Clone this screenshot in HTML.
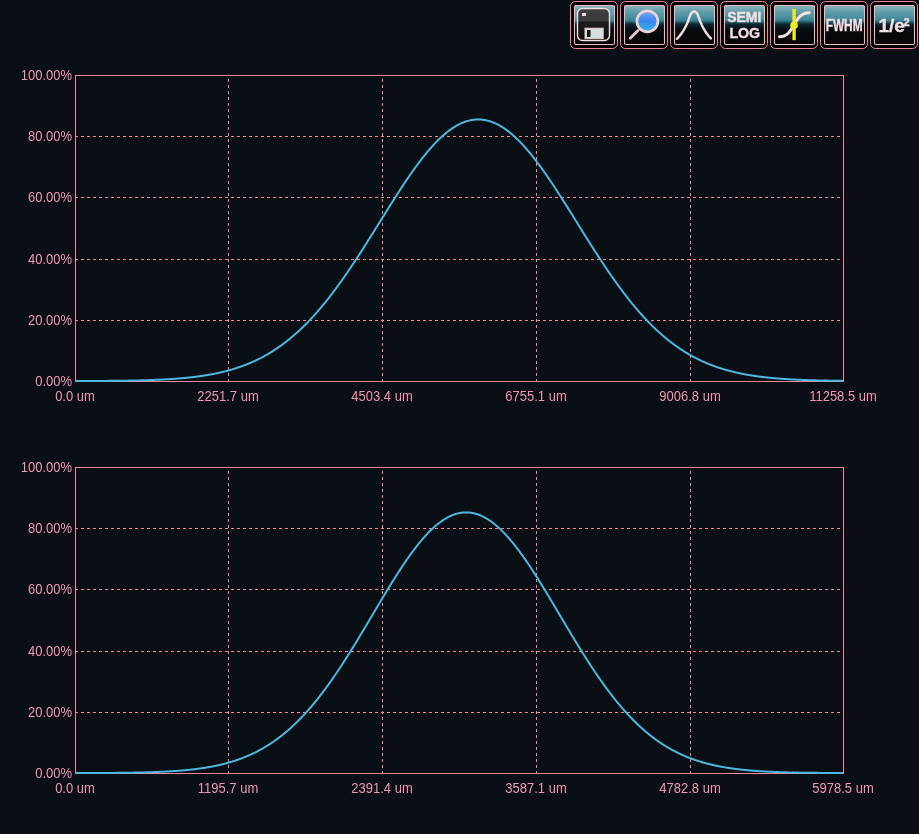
<!DOCTYPE html>
<html><head><meta charset="utf-8"><style>
html,body{margin:0;padding:0;width:919px;height:834px;overflow:hidden;background:#0a0e15;}
.pl text{font-family:"Liberation Sans",sans-serif;font-size:13px;}
svg{will-change:transform}
.cv{fill:none;stroke:#4cb8e0;stroke-width:2.0;stroke-linejoin:round;shape-rendering:geometricPrecision}
</style></head><body>
<svg width="919" height="834" viewBox="0 0 919 834" style="position:absolute;left:0;top:0">
<g class="pl" shape-rendering="crispEdges" fill="#f096b0">
<path d="M75 136.5H843" stroke="#f5869a" stroke-dasharray="3 3"/>
<path d="M75 197.5H843" stroke="#f5869a" stroke-dasharray="3 3"/>
<path d="M75 259.5H843" stroke="#f5869a" stroke-dasharray="3 3"/>
<path d="M75 320.5H843" stroke="#f5869a" stroke-dasharray="3 3"/>
<path d="M228.5 382V75" stroke="#f5869a" stroke-dasharray="3 3"/>
<path d="M382.5 382V75" stroke="#f5869a" stroke-dasharray="3 3"/>
<path d="M536.5 382V75" stroke="#f5869a" stroke-dasharray="3 3"/>
<path d="M690.5 382V75" stroke="#f5869a" stroke-dasharray="3 3"/>
<rect x="75.5" y="75.5" width="768" height="306" fill="none" stroke="#f5869a"/>
<path class="cv" d="M75.0,381.04 L75.5,381.04 L76.0,381.04 L76.5,381.03 L77.0,381.03 L77.5,381.03 L78.0,381.03 L78.5,381.03 L79.0,381.03 L79.5,381.03 L80.0,381.02 L80.5,381.02 L81.0,381.02 L81.5,381.02 L82.0,381.02 L82.5,381.02 L83.0,381.01 L83.5,381.01 L84.0,381.01 L84.5,381.01 L85.0,381.01 L85.5,381.00 L86.0,381.00 L86.5,381.00 L87.0,381.00 L87.5,381.00 L88.0,380.99 L88.5,380.99 L89.0,380.99 L89.5,380.99 L90.0,380.99 L90.5,380.98 L91.0,380.98 L91.5,380.98 L92.0,380.98 L92.5,380.97 L93.0,380.97 L93.5,380.97 L94.0,380.97 L94.5,380.96 L95.0,380.96 L95.5,380.96 L96.0,380.95 L96.5,380.95 L97.0,380.95 L97.5,380.95 L98.0,380.94 L98.5,380.94 L99.0,380.94 L99.5,380.93 L100.0,380.93 L100.5,380.93 L101.0,380.92 L101.5,380.92 L102.0,380.92 L102.5,380.91 L103.0,380.91 L103.5,380.91 L104.0,380.90 L104.5,380.90 L105.0,380.89 L105.5,380.89 L106.0,380.89 L106.5,380.88 L107.0,380.88 L107.5,380.87 L108.0,380.87 L108.5,380.87 L109.0,380.86 L109.5,380.86 L110.0,380.85 L110.5,380.85 L111.0,380.84 L111.5,380.84 L112.0,380.83 L112.5,380.83 L113.0,380.82 L113.5,380.82 L114.0,380.81 L114.5,380.81 L115.0,380.80 L115.5,380.79 L116.0,380.79 L116.5,380.78 L117.0,380.78 L117.5,380.77 L118.0,380.76 L118.5,380.76 L119.0,380.75 L119.5,380.75 L120.0,380.74 L120.5,380.73 L121.0,380.73 L121.5,380.72 L122.0,380.71 L122.5,380.70 L123.0,380.70 L123.5,380.69 L124.0,380.68 L124.5,380.67 L125.0,380.67 L125.5,380.66 L126.0,380.65 L126.5,380.64 L127.0,380.63 L127.5,380.63 L128.0,380.62 L128.5,380.61 L129.0,380.60 L129.5,380.59 L130.0,380.58 L130.5,380.57 L131.0,380.56 L131.5,380.55 L132.0,380.54 L132.5,380.53 L133.0,380.52 L133.5,380.51 L134.0,380.50 L134.5,380.49 L135.0,380.48 L135.5,380.47 L136.0,380.46 L136.5,380.45 L137.0,380.44 L137.5,380.42 L138.0,380.41 L138.5,380.40 L139.0,380.39 L139.5,380.37 L140.0,380.36 L140.5,380.35 L141.0,380.34 L141.5,380.32 L142.0,380.31 L142.5,380.30 L143.0,380.28 L143.5,380.27 L144.0,380.25 L144.5,380.24 L145.0,380.22 L145.5,380.21 L146.0,380.19 L146.5,380.18 L147.0,380.16 L147.5,380.15 L148.0,380.13 L148.5,380.11 L149.0,380.10 L149.5,380.08 L150.0,380.06 L150.5,380.04 L151.0,380.03 L151.5,380.01 L152.0,379.99 L152.5,379.97 L153.0,379.95 L153.5,379.93 L154.0,379.91 L154.5,379.89 L155.0,379.87 L155.5,379.85 L156.0,379.83 L156.5,379.81 L157.0,379.79 L157.5,379.77 L158.0,379.74 L158.5,379.72 L159.0,379.70 L159.5,379.68 L160.0,379.65 L160.5,379.63 L161.0,379.60 L161.5,379.58 L162.0,379.55 L162.5,379.53 L163.0,379.50 L163.5,379.48 L164.0,379.45 L164.5,379.42 L165.0,379.40 L165.5,379.37 L166.0,379.34 L166.5,379.31 L167.0,379.28 L167.5,379.26 L168.0,379.23 L168.5,379.20 L169.0,379.17 L169.5,379.13 L170.0,379.10 L170.5,379.07 L171.0,379.04 L171.5,379.01 L172.0,378.97 L172.5,378.94 L173.0,378.91 L173.5,378.87 L174.0,378.84 L174.5,378.80 L175.0,378.76 L175.5,378.73 L176.0,378.69 L176.5,378.65 L177.0,378.61 L177.5,378.58 L178.0,378.54 L178.5,378.50 L179.0,378.46 L179.5,378.42 L180.0,378.37 L180.5,378.33 L181.0,378.29 L181.5,378.25 L182.0,378.20 L182.5,378.16 L183.0,378.11 L183.5,378.07 L184.0,378.02 L184.5,377.97 L185.0,377.93 L185.5,377.88 L186.0,377.83 L186.5,377.78 L187.0,377.73 L187.5,377.68 L188.0,377.63 L188.5,377.58 L189.0,377.52 L189.5,377.47 L190.0,377.42 L190.5,377.36 L191.0,377.31 L191.5,377.25 L192.0,377.19 L192.5,377.14 L193.0,377.08 L193.5,377.02 L194.0,376.96 L194.5,376.90 L195.0,376.83 L195.5,376.77 L196.0,376.71 L196.5,376.65 L197.0,376.58 L197.5,376.51 L198.0,376.45 L198.5,376.38 L199.0,376.31 L199.5,376.24 L200.0,376.17 L200.5,376.10 L201.0,376.03 L201.5,375.96 L202.0,375.89 L202.5,375.81 L203.0,375.74 L203.5,375.66 L204.0,375.58 L204.5,375.50 L205.0,375.43 L205.5,375.34 L206.0,375.26 L206.5,375.18 L207.0,375.10 L207.5,375.01 L208.0,374.93 L208.5,374.84 L209.0,374.76 L209.5,374.67 L210.0,374.58 L210.5,374.49 L211.0,374.40 L211.5,374.31 L212.0,374.21 L212.5,374.12 L213.0,374.02 L213.5,373.92 L214.0,373.83 L214.5,373.73 L215.0,373.63 L215.5,373.52 L216.0,373.42 L216.5,373.32 L217.0,373.21 L217.5,373.11 L218.0,373.00 L218.5,372.89 L219.0,372.78 L219.5,372.67 L220.0,372.56 L220.5,372.44 L221.0,372.33 L221.5,372.21 L222.0,372.09 L222.5,371.97 L223.0,371.85 L223.5,371.73 L224.0,371.61 L224.5,371.48 L225.0,371.36 L225.5,371.23 L226.0,371.10 L226.5,370.97 L227.0,370.84 L227.5,370.71 L228.0,370.57 L228.5,370.44 L229.0,370.30 L229.5,370.16 L230.0,370.02 L230.5,369.88 L231.0,369.74 L231.5,369.59 L232.0,369.44 L232.5,369.30 L233.0,369.15 L233.5,368.99 L234.0,368.84 L234.5,368.69 L235.0,368.53 L235.5,368.37 L236.0,368.21 L236.5,368.05 L237.0,367.89 L237.5,367.73 L238.0,367.56 L238.5,367.39 L239.0,367.22 L239.5,367.05 L240.0,366.88 L240.5,366.70 L241.0,366.53 L241.5,366.35 L242.0,366.17 L242.5,365.99 L243.0,365.80 L243.5,365.62 L244.0,365.43 L244.5,365.24 L245.0,365.05 L245.5,364.86 L246.0,364.66 L246.5,364.46 L247.0,364.27 L247.5,364.07 L248.0,363.86 L248.5,363.66 L249.0,363.45 L249.5,363.24 L250.0,363.03 L250.5,362.82 L251.0,362.60 L251.5,362.39 L252.0,362.17 L252.5,361.95 L253.0,361.73 L253.5,361.50 L254.0,361.27 L254.5,361.04 L255.0,360.81 L255.5,360.58 L256.0,360.34 L256.5,360.11 L257.0,359.87 L257.5,359.62 L258.0,359.38 L258.5,359.13 L259.0,358.88 L259.5,358.63 L260.0,358.38 L260.5,358.12 L261.0,357.87 L261.5,357.61 L262.0,357.34 L262.5,357.08 L263.0,356.81 L263.5,356.54 L264.0,356.27 L264.5,356.00 L265.0,355.72 L265.5,355.44 L266.0,355.16 L266.5,354.88 L267.0,354.59 L267.5,354.30 L268.0,354.01 L268.5,353.72 L269.0,353.42 L269.5,353.12 L270.0,352.82 L270.5,352.52 L271.0,352.21 L271.5,351.90 L272.0,351.59 L272.5,351.28 L273.0,350.96 L273.5,350.64 L274.0,350.32 L274.5,350.00 L275.0,349.67 L275.5,349.34 L276.0,349.01 L276.5,348.68 L277.0,348.34 L277.5,348.00 L278.0,347.66 L278.5,347.31 L279.0,346.97 L279.5,346.62 L280.0,346.26 L280.5,345.91 L281.0,345.55 L281.5,345.19 L282.0,344.82 L282.5,344.46 L283.0,344.09 L283.5,343.72 L284.0,343.34 L284.5,342.96 L285.0,342.58 L285.5,342.20 L286.0,341.81 L286.5,341.42 L287.0,341.03 L287.5,340.64 L288.0,340.24 L288.5,339.84 L289.0,339.44 L289.5,339.03 L290.0,338.62 L290.5,338.21 L291.0,337.79 L291.5,337.38 L292.0,336.96 L292.5,336.53 L293.0,336.11 L293.5,335.68 L294.0,335.25 L294.5,334.81 L295.0,334.37 L295.5,333.93 L296.0,333.49 L296.5,333.04 L297.0,332.59 L297.5,332.14 L298.0,331.68 L298.5,331.23 L299.0,330.76 L299.5,330.30 L300.0,329.83 L300.5,329.36 L301.0,328.89 L301.5,328.41 L302.0,327.93 L302.5,327.45 L303.0,326.96 L303.5,326.48 L304.0,325.99 L304.5,325.49 L305.0,324.99 L305.5,324.49 L306.0,323.99 L306.5,323.48 L307.0,322.97 L307.5,322.46 L308.0,321.95 L308.5,321.43 L309.0,320.91 L309.5,320.38 L310.0,319.86 L310.5,319.33 L311.0,318.79 L311.5,318.26 L312.0,317.72 L312.5,317.18 L313.0,316.63 L313.5,316.08 L314.0,315.53 L314.5,314.98 L315.0,314.42 L315.5,313.86 L316.0,313.30 L316.5,312.73 L317.0,312.16 L317.5,311.59 L318.0,311.02 L318.5,310.44 L319.0,309.86 L319.5,309.27 L320.0,308.69 L320.5,308.10 L321.0,307.51 L321.5,306.91 L322.0,306.31 L322.5,305.71 L323.0,305.11 L323.5,304.50 L324.0,303.89 L324.5,303.28 L325.0,302.66 L325.5,302.04 L326.0,301.42 L326.5,300.80 L327.0,300.17 L327.5,299.54 L328.0,298.91 L328.5,298.28 L329.0,297.64 L329.5,297.00 L330.0,296.35 L330.5,295.71 L331.0,295.06 L331.5,294.41 L332.0,293.75 L332.5,293.10 L333.0,292.44 L333.5,291.78 L334.0,291.11 L334.5,290.44 L335.0,289.77 L335.5,289.10 L336.0,288.43 L336.5,287.75 L337.0,287.07 L337.5,286.39 L338.0,285.70 L338.5,285.01 L339.0,284.32 L339.5,283.63 L340.0,282.94 L340.5,282.24 L341.0,281.54 L341.5,280.84 L342.0,280.13 L342.5,279.42 L343.0,278.71 L343.5,278.00 L344.0,277.29 L344.5,276.57 L345.0,275.85 L345.5,275.13 L346.0,274.41 L346.5,273.69 L347.0,272.96 L347.5,272.23 L348.0,271.50 L348.5,270.76 L349.0,270.03 L349.5,269.29 L350.0,268.55 L350.5,267.81 L351.0,267.07 L351.5,266.32 L352.0,265.57 L352.5,264.82 L353.0,264.07 L353.5,263.32 L354.0,262.57 L354.5,261.81 L355.0,261.05 L355.5,260.29 L356.0,259.53 L356.5,258.77 L357.0,258.00 L357.5,257.24 L358.0,256.47 L358.5,255.70 L359.0,254.93 L359.5,254.15 L360.0,253.38 L360.5,252.60 L361.0,251.83 L361.5,251.05 L362.0,250.27 L362.5,249.49 L363.0,248.71 L363.5,247.92 L364.0,247.14 L364.5,246.35 L365.0,245.56 L365.5,244.78 L366.0,243.99 L366.5,243.20 L367.0,242.41 L367.5,241.61 L368.0,240.82 L368.5,240.03 L369.0,239.23 L369.5,238.44 L370.0,237.64 L370.5,236.84 L371.0,236.05 L371.5,235.25 L372.0,234.45 L372.5,233.65 L373.0,232.85 L373.5,232.05 L374.0,231.25 L374.5,230.45 L375.0,229.64 L375.5,228.84 L376.0,228.04 L376.5,227.24 L377.0,226.43 L377.5,225.63 L378.0,224.82 L378.5,224.02 L379.0,223.22 L379.5,222.41 L380.0,221.61 L380.5,220.81 L381.0,220.00 L381.5,219.20 L382.0,218.39 L382.5,217.59 L383.0,216.79 L383.5,215.99 L384.0,215.18 L384.5,214.38 L385.0,213.58 L385.5,212.78 L386.0,211.98 L386.5,211.18 L387.0,210.38 L387.5,209.58 L388.0,208.78 L388.5,207.98 L389.0,207.19 L389.5,206.39 L390.0,205.60 L390.5,204.80 L391.0,204.01 L391.5,203.22 L392.0,202.43 L392.5,201.64 L393.0,200.85 L393.5,200.06 L394.0,199.27 L394.5,198.49 L395.0,197.71 L395.5,196.92 L396.0,196.14 L396.5,195.36 L397.0,194.58 L397.5,193.81 L398.0,193.03 L398.5,192.26 L399.0,191.49 L399.5,190.72 L400.0,189.95 L400.5,189.18 L401.0,188.42 L401.5,187.66 L402.0,186.90 L402.5,186.14 L403.0,185.38 L403.5,184.63 L404.0,183.87 L404.5,183.12 L405.0,182.38 L405.5,181.63 L406.0,180.89 L406.5,180.15 L407.0,179.41 L407.5,178.67 L408.0,177.94 L408.5,177.21 L409.0,176.48 L409.5,175.76 L410.0,175.03 L410.5,174.31 L411.0,173.60 L411.5,172.88 L412.0,172.17 L412.5,171.46 L413.0,170.76 L413.5,170.05 L414.0,169.35 L414.5,168.66 L415.0,167.97 L415.5,167.28 L416.0,166.59 L416.5,165.91 L417.0,165.23 L417.5,164.55 L418.0,163.88 L418.5,163.21 L419.0,162.54 L419.5,161.88 L420.0,161.22 L420.5,160.57 L421.0,159.91 L421.5,159.27 L422.0,158.62 L422.5,157.98 L423.0,157.35 L423.5,156.72 L424.0,156.09 L424.5,155.46 L425.0,154.84 L425.5,154.23 L426.0,153.62 L426.5,153.01 L427.0,152.41 L427.5,151.81 L428.0,151.21 L428.5,150.62 L429.0,150.04 L429.5,149.46 L430.0,148.88 L430.5,148.31 L431.0,147.74 L431.5,147.18 L432.0,146.62 L432.5,146.06 L433.0,145.52 L433.5,144.97 L434.0,144.43 L434.5,143.90 L435.0,143.37 L435.5,142.84 L436.0,142.32 L436.5,141.81 L437.0,141.30 L437.5,140.79 L438.0,140.30 L438.5,139.80 L439.0,139.31 L439.5,138.83 L440.0,138.35 L440.5,137.88 L441.0,137.41 L441.5,136.95 L442.0,136.49 L442.5,136.04 L443.0,135.59 L443.5,135.15 L444.0,134.71 L444.5,134.28 L445.0,133.86 L445.5,133.44 L446.0,133.03 L446.5,132.62 L447.0,132.22 L447.5,131.82 L448.0,131.43 L448.5,131.05 L449.0,130.67 L449.5,130.30 L450.0,129.93 L450.5,129.57 L451.0,129.22 L451.5,128.87 L452.0,128.53 L452.5,128.19 L453.0,127.86 L453.5,127.54 L454.0,127.22 L454.5,126.90 L455.0,126.60 L455.5,126.30 L456.0,126.01 L456.5,125.72 L457.0,125.44 L457.5,125.16 L458.0,124.89 L458.5,124.63 L459.0,124.37 L459.5,124.12 L460.0,123.88 L460.5,123.64 L461.0,123.41 L461.5,123.19 L462.0,122.97 L462.5,122.76 L463.0,122.55 L463.5,122.36 L464.0,122.16 L464.5,121.98 L465.0,121.80 L465.5,121.63 L466.0,121.46 L466.5,121.30 L467.0,121.15 L467.5,121.00 L468.0,120.86 L468.5,120.73 L469.0,120.60 L469.5,120.48 L470.0,120.37 L470.5,120.26 L471.0,120.17 L471.5,120.07 L472.0,119.99 L472.5,119.91 L473.0,119.83 L473.5,119.77 L474.0,119.71 L474.5,119.65 L475.0,119.61 L475.5,119.57 L476.0,119.53 L476.5,119.51 L477.0,119.49 L477.5,119.48 L478.0,119.47 L478.5,119.47 L479.0,119.48 L479.5,119.49 L480.0,119.51 L480.5,119.54 L481.0,119.58 L481.5,119.62 L482.0,119.66 L482.5,119.72 L483.0,119.78 L483.5,119.85 L484.0,119.92 L484.5,120.00 L485.0,120.09 L485.5,120.18 L486.0,120.29 L486.5,120.39 L487.0,120.51 L487.5,120.63 L488.0,120.76 L488.5,120.89 L489.0,121.03 L489.5,121.18 L490.0,121.33 L490.5,121.49 L491.0,121.66 L491.5,121.83 L492.0,122.01 L492.5,122.20 L493.0,122.39 L493.5,122.59 L494.0,122.80 L494.5,123.01 L495.0,123.23 L495.5,123.46 L496.0,123.69 L496.5,123.93 L497.0,124.17 L497.5,124.42 L498.0,124.68 L498.5,124.95 L499.0,125.22 L499.5,125.49 L500.0,125.77 L500.5,126.06 L501.0,126.36 L501.5,126.66 L502.0,126.97 L502.5,127.28 L503.0,127.60 L503.5,127.93 L504.0,128.26 L504.5,128.60 L505.0,128.94 L505.5,129.29 L506.0,129.64 L506.5,130.01 L507.0,130.37 L507.5,130.75 L508.0,131.13 L508.5,131.51 L509.0,131.90 L509.5,132.30 L510.0,132.70 L510.5,133.11 L511.0,133.53 L511.5,133.94 L512.0,134.37 L512.5,134.80 L513.0,135.24 L513.5,135.68 L514.0,136.13 L514.5,136.58 L515.0,137.04 L515.5,137.50 L516.0,137.97 L516.5,138.44 L517.0,138.92 L517.5,139.41 L518.0,139.90 L518.5,140.39 L519.0,140.90 L519.5,141.40 L520.0,141.91 L520.5,142.43 L521.0,142.95 L521.5,143.47 L522.0,144.00 L522.5,144.54 L523.0,145.08 L523.5,145.62 L524.0,146.17 L524.5,146.73 L525.0,147.29 L525.5,147.85 L526.0,148.42 L526.5,148.99 L527.0,149.57 L527.5,150.15 L528.0,150.74 L528.5,151.33 L529.0,151.93 L529.5,152.53 L530.0,153.13 L530.5,153.74 L531.0,154.35 L531.5,154.97 L532.0,155.59 L532.5,156.21 L533.0,156.84 L533.5,157.47 L534.0,158.11 L534.5,158.75 L535.0,159.40 L535.5,160.04 L536.0,160.70 L536.5,161.35 L537.0,162.01 L537.5,162.67 L538.0,163.34 L538.5,164.01 L539.0,164.68 L539.5,165.36 L540.0,166.04 L540.5,166.73 L541.0,167.41 L541.5,168.10 L542.0,168.80 L542.5,169.49 L543.0,170.19 L543.5,170.90 L544.0,171.60 L544.5,172.31 L545.0,173.02 L545.5,173.74 L546.0,174.46 L546.5,175.18 L547.0,175.90 L547.5,176.63 L548.0,177.35 L548.5,178.09 L549.0,178.82 L549.5,179.56 L550.0,180.29 L550.5,181.04 L551.0,181.78 L551.5,182.53 L552.0,183.27 L552.5,184.02 L553.0,184.78 L553.5,185.53 L554.0,186.29 L554.5,187.05 L555.0,187.81 L555.5,188.57 L556.0,189.34 L556.5,190.10 L557.0,190.87 L557.5,191.64 L558.0,192.41 L558.5,193.19 L559.0,193.96 L559.5,194.74 L560.0,195.52 L560.5,196.30 L561.0,197.08 L561.5,197.86 L562.0,198.65 L562.5,199.43 L563.0,200.22 L563.5,201.01 L564.0,201.79 L564.5,202.58 L565.0,203.38 L565.5,204.17 L566.0,204.96 L566.5,205.76 L567.0,206.55 L567.5,207.35 L568.0,208.14 L568.5,208.94 L569.0,209.74 L569.5,210.54 L570.0,211.34 L570.5,212.14 L571.0,212.94 L571.5,213.74 L572.0,214.54 L572.5,215.34 L573.0,216.15 L573.5,216.95 L574.0,217.75 L574.5,218.56 L575.0,219.36 L575.5,220.16 L576.0,220.97 L576.5,221.77 L577.0,222.57 L577.5,223.38 L578.0,224.18 L578.5,224.99 L579.0,225.79 L579.5,226.59 L580.0,227.40 L580.5,228.20 L581.0,229.00 L581.5,229.80 L582.0,230.61 L582.5,231.41 L583.0,232.21 L583.5,233.01 L584.0,233.81 L584.5,234.61 L585.0,235.41 L585.5,236.21 L586.0,237.00 L586.5,237.80 L587.0,238.60 L587.5,239.39 L588.0,240.19 L588.5,240.98 L589.0,241.77 L589.5,242.56 L590.0,243.36 L590.5,244.15 L591.0,244.93 L591.5,245.72 L592.0,246.51 L592.5,247.29 L593.0,248.08 L593.5,248.86 L594.0,249.64 L594.5,250.42 L595.0,251.20 L595.5,251.98 L596.0,252.76 L596.5,253.53 L597.0,254.31 L597.5,255.08 L598.0,255.85 L598.5,256.62 L599.0,257.39 L599.5,258.15 L600.0,258.92 L600.5,259.68 L601.0,260.44 L601.5,261.20 L602.0,261.96 L602.5,262.72 L603.0,263.47 L603.5,264.22 L604.0,264.97 L604.5,265.72 L605.0,266.47 L605.5,267.22 L606.0,267.96 L606.5,268.70 L607.0,269.44 L607.5,270.18 L608.0,270.91 L608.5,271.64 L609.0,272.38 L609.5,273.10 L610.0,273.83 L610.5,274.56 L611.0,275.28 L611.5,276.00 L612.0,276.72 L612.5,277.43 L613.0,278.15 L613.5,278.86 L614.0,279.57 L614.5,280.27 L615.0,280.98 L615.5,281.68 L616.0,282.38 L616.5,283.07 L617.0,283.77 L617.5,284.46 L618.0,285.15 L618.5,285.84 L619.0,286.52 L619.5,287.21 L620.0,287.88 L620.5,288.56 L621.0,289.24 L621.5,289.91 L622.0,290.58 L622.5,291.24 L623.0,291.91 L623.5,292.57 L624.0,293.23 L624.5,293.89 L625.0,294.54 L625.5,295.19 L626.0,295.84 L626.5,296.48 L627.0,297.13 L627.5,297.77 L628.0,298.40 L628.5,299.04 L629.0,299.67 L629.5,300.30 L630.0,300.92 L630.5,301.55 L631.0,302.17 L631.5,302.79 L632.0,303.40 L632.5,304.01 L633.0,304.62 L633.5,305.23 L634.0,305.83 L634.5,306.43 L635.0,307.03 L635.5,307.62 L636.0,308.22 L636.5,308.80 L637.0,309.39 L637.5,309.97 L638.0,310.55 L638.5,311.13 L639.0,311.70 L639.5,312.28 L640.0,312.84 L640.5,313.41 L641.0,313.97 L641.5,314.53 L642.0,315.09 L642.5,315.64 L643.0,316.19 L643.5,316.74 L644.0,317.28 L644.5,317.83 L645.0,318.36 L645.5,318.90 L646.0,319.43 L646.5,319.96 L647.0,320.49 L647.5,321.01 L648.0,321.53 L648.5,322.05 L649.0,322.57 L649.5,323.08 L650.0,323.59 L650.5,324.09 L651.0,324.59 L651.5,325.09 L652.0,325.59 L652.5,326.08 L653.0,326.57 L653.5,327.06 L654.0,327.55 L654.5,328.03 L655.0,328.51 L655.5,328.98 L656.0,329.46 L656.5,329.93 L657.0,330.39 L657.5,330.86 L658.0,331.32 L658.5,331.78 L659.0,332.23 L659.5,332.68 L660.0,333.13 L660.5,333.58 L661.0,334.02 L661.5,334.46 L662.0,334.90 L662.5,335.33 L663.0,335.76 L663.5,336.19 L664.0,336.62 L664.5,337.04 L665.0,337.46 L665.5,337.88 L666.0,338.29 L666.5,338.70 L667.0,339.11 L667.5,339.52 L668.0,339.92 L668.5,340.32 L669.0,340.72 L669.5,341.11 L670.0,341.50 L670.5,341.89 L671.0,342.28 L671.5,342.66 L672.0,343.04 L672.5,343.42 L673.0,343.79 L673.5,344.16 L674.0,344.53 L674.5,344.90 L675.0,345.26 L675.5,345.62 L676.0,345.98 L676.5,346.33 L677.0,346.69 L677.5,347.04 L678.0,347.38 L678.5,347.73 L679.0,348.07 L679.5,348.41 L680.0,348.74 L680.5,349.08 L681.0,349.41 L681.5,349.74 L682.0,350.06 L682.5,350.39 L683.0,350.71 L683.5,351.03 L684.0,351.34 L684.5,351.66 L685.0,351.97 L685.5,352.27 L686.0,352.58 L686.5,352.88 L687.0,353.18 L687.5,353.48 L688.0,353.78 L688.5,354.07 L689.0,354.36 L689.5,354.65 L690.0,354.93 L690.5,355.22 L691.0,355.50 L691.5,355.78 L692.0,356.05 L692.5,356.33 L693.0,356.60 L693.5,356.87 L694.0,357.13 L694.5,357.40 L695.0,357.66 L695.5,357.92 L696.0,358.18 L696.5,358.43 L697.0,358.68 L697.5,358.93 L698.0,359.18 L698.5,359.43 L699.0,359.67 L699.5,359.91 L700.0,360.15 L700.5,360.39 L701.0,360.63 L701.5,360.86 L702.0,361.09 L702.5,361.32 L703.0,361.55 L703.5,361.77 L704.0,361.99 L704.5,362.21 L705.0,362.43 L705.5,362.65 L706.0,362.86 L706.5,363.07 L707.0,363.28 L707.5,363.49 L708.0,363.70 L708.5,363.90 L709.0,364.11 L709.5,364.31 L710.0,364.50 L710.5,364.70 L711.0,364.90 L711.5,365.09 L712.0,365.28 L712.5,365.47 L713.0,365.65 L713.5,365.84 L714.0,366.02 L714.5,366.21 L715.0,366.38 L715.5,366.56 L716.0,366.74 L716.5,366.91 L717.0,367.09 L717.5,367.26 L718.0,367.43 L718.5,367.59 L719.0,367.76 L719.5,367.92 L720.0,368.09 L720.5,368.25 L721.0,368.41 L721.5,368.56 L722.0,368.72 L722.5,368.87 L723.0,369.03 L723.5,369.18 L724.0,369.33 L724.5,369.47 L725.0,369.62 L725.5,369.76 L726.0,369.91 L726.5,370.05 L727.0,370.19 L727.5,370.33 L728.0,370.46 L728.5,370.60 L729.0,370.73 L729.5,370.87 L730.0,371.00 L730.5,371.13 L731.0,371.26 L731.5,371.38 L732.0,371.51 L732.5,371.63 L733.0,371.76 L733.5,371.88 L734.0,372.00 L734.5,372.12 L735.0,372.23 L735.5,372.35 L736.0,372.47 L736.5,372.58 L737.0,372.69 L737.5,372.80 L738.0,372.91 L738.5,373.02 L739.0,373.13 L739.5,373.23 L740.0,373.34 L740.5,373.44 L741.0,373.55 L741.5,373.65 L742.0,373.75 L742.5,373.85 L743.0,373.94 L743.5,374.04 L744.0,374.14 L744.5,374.23 L745.0,374.32 L745.5,374.42 L746.0,374.51 L746.5,374.60 L747.0,374.69 L747.5,374.77 L748.0,374.86 L748.5,374.95 L749.0,375.03 L749.5,375.12 L750.0,375.20 L750.5,375.28 L751.0,375.36 L751.5,375.44 L752.0,375.52 L752.5,375.60 L753.0,375.67 L753.5,375.75 L754.0,375.83 L754.5,375.90 L755.0,375.97 L755.5,376.05 L756.0,376.12 L756.5,376.19 L757.0,376.26 L757.5,376.33 L758.0,376.39 L758.5,376.46 L759.0,376.53 L759.5,376.59 L760.0,376.66 L760.5,376.72 L761.0,376.78 L761.5,376.85 L762.0,376.91 L762.5,376.97 L763.0,377.03 L763.5,377.09 L764.0,377.15 L764.5,377.20 L765.0,377.26 L765.5,377.32 L766.0,377.37 L766.5,377.43 L767.0,377.48 L767.5,377.53 L768.0,377.59 L768.5,377.64 L769.0,377.69 L769.5,377.74 L770.0,377.79 L770.5,377.84 L771.0,377.89 L771.5,377.94 L772.0,377.98 L772.5,378.03 L773.0,378.08 L773.5,378.12 L774.0,378.17 L774.5,378.21 L775.0,378.25 L775.5,378.30 L776.0,378.34 L776.5,378.38 L777.0,378.42 L777.5,378.46 L778.0,378.50 L778.5,378.54 L779.0,378.58 L779.5,378.62 L780.0,378.66 L780.5,378.70 L781.0,378.73 L781.5,378.77 L782.0,378.81 L782.5,378.84 L783.0,378.88 L783.5,378.91 L784.0,378.95 L784.5,378.98 L785.0,379.01 L785.5,379.05 L786.0,379.08 L786.5,379.11 L787.0,379.14 L787.5,379.17 L788.0,379.20 L788.5,379.23 L789.0,379.26 L789.5,379.29 L790.0,379.32 L790.5,379.35 L791.0,379.38 L791.5,379.40 L792.0,379.43 L792.5,379.46 L793.0,379.48 L793.5,379.51 L794.0,379.53 L794.5,379.56 L795.0,379.58 L795.5,379.61 L796.0,379.63 L796.5,379.66 L797.0,379.68 L797.5,379.70 L798.0,379.73 L798.5,379.75 L799.0,379.77 L799.5,379.79 L800.0,379.81 L800.5,379.83 L801.0,379.86 L801.5,379.88 L802.0,379.90 L802.5,379.92 L803.0,379.94 L803.5,379.95 L804.0,379.97 L804.5,379.99 L805.0,380.01 L805.5,380.03 L806.0,380.05 L806.5,380.06 L807.0,380.08 L807.5,380.10 L808.0,380.12 L808.5,380.13 L809.0,380.15 L809.5,380.16 L810.0,380.18 L810.5,380.20 L811.0,380.21 L811.5,380.23 L812.0,380.24 L812.5,380.26 L813.0,380.27 L813.5,380.28 L814.0,380.30 L814.5,380.31 L815.0,380.33 L815.5,380.34 L816.0,380.35 L816.5,380.36 L817.0,380.38 L817.5,380.39 L818.0,380.40 L818.5,380.41 L819.0,380.43 L819.5,380.44 L820.0,380.45 L820.5,380.46 L821.0,380.47 L821.5,380.48 L822.0,380.49 L822.5,380.50 L823.0,380.51 L823.5,380.52 L824.0,380.53 L824.5,380.54 L825.0,380.55 L825.5,380.56 L826.0,380.57 L826.5,380.58 L827.0,380.59 L827.5,380.60 L828.0,380.61 L828.5,380.62 L829.0,380.63 L829.5,380.64 L830.0,380.64 L830.5,380.65 L831.0,380.66 L831.5,380.67 L832.0,380.68 L832.5,380.68 L833.0,380.69 L833.5,380.70 L834.0,380.71 L834.5,380.71 L835.0,380.72 L835.5,380.73 L836.0,380.73 L836.5,380.74 L837.0,380.75 L837.5,380.75 L838.0,380.76 L838.5,380.77 L839.0,380.77 L839.5,380.78 L840.0,380.78 L840.5,380.79 L841.0,380.80 L841.5,380.80 L842.0,380.81 L842.5,380.81 L843.0,380.82"/>
<text transform="translate(72 80) scale(1 1.1)" text-anchor="end">100.00%</text>
<text transform="translate(72 141) scale(1 1.1)" text-anchor="end">80.00%</text>
<text transform="translate(72 202) scale(1 1.1)" text-anchor="end">60.00%</text>
<text transform="translate(72 264) scale(1 1.1)" text-anchor="end">40.00%</text>
<text transform="translate(72 325) scale(1 1.1)" text-anchor="end">20.00%</text>
<text transform="translate(72 386) scale(1 1.1)" text-anchor="end">0.00%</text>
<text transform="translate(75 401) scale(1 1.1)" text-anchor="middle">0.0 um</text>
<text transform="translate(228 401) scale(1 1.1)" text-anchor="middle">2251.7 um</text>
<text transform="translate(382 401) scale(1 1.1)" text-anchor="middle">4503.4 um</text>
<text transform="translate(536 401) scale(1 1.1)" text-anchor="middle">6755.1 um</text>
<text transform="translate(690 401) scale(1 1.1)" text-anchor="middle">9006.8 um</text>
<text transform="translate(843 401) scale(1 1.1)" text-anchor="middle">11258.5 um</text>
<path d="M75 528.5H843" stroke="#f5869a" stroke-dasharray="3 3"/>
<path d="M75 589.5H843" stroke="#f5869a" stroke-dasharray="3 3"/>
<path d="M75 651.5H843" stroke="#f5869a" stroke-dasharray="3 3"/>
<path d="M75 712.5H843" stroke="#f5869a" stroke-dasharray="3 3"/>
<path d="M228.5 774V467" stroke="#f5869a" stroke-dasharray="3 3"/>
<path d="M382.5 774V467" stroke="#f5869a" stroke-dasharray="3 3"/>
<path d="M536.5 774V467" stroke="#f5869a" stroke-dasharray="3 3"/>
<path d="M690.5 774V467" stroke="#f5869a" stroke-dasharray="3 3"/>
<rect x="75.5" y="467.5" width="768" height="306" fill="none" stroke="#f5869a"/>
<path class="cv" d="M75.0,773.06 L75.5,773.06 L76.0,773.06 L76.5,773.05 L77.0,773.05 L77.5,773.05 L78.0,773.05 L78.5,773.05 L79.0,773.05 L79.5,773.05 L80.0,773.05 L80.5,773.05 L81.0,773.04 L81.5,773.04 L82.0,773.04 L82.5,773.04 L83.0,773.04 L83.5,773.04 L84.0,773.04 L84.5,773.04 L85.0,773.03 L85.5,773.03 L86.0,773.03 L86.5,773.03 L87.0,773.03 L87.5,773.03 L88.0,773.02 L88.5,773.02 L89.0,773.02 L89.5,773.02 L90.0,773.02 L90.5,773.02 L91.0,773.01 L91.5,773.01 L92.0,773.01 L92.5,773.01 L93.0,773.01 L93.5,773.00 L94.0,773.00 L94.5,773.00 L95.0,773.00 L95.5,773.00 L96.0,772.99 L96.5,772.99 L97.0,772.99 L97.5,772.99 L98.0,772.98 L98.5,772.98 L99.0,772.98 L99.5,772.98 L100.0,772.97 L100.5,772.97 L101.0,772.97 L101.5,772.97 L102.0,772.96 L102.5,772.96 L103.0,772.96 L103.5,772.95 L104.0,772.95 L104.5,772.95 L105.0,772.95 L105.5,772.94 L106.0,772.94 L106.5,772.94 L107.0,772.93 L107.5,772.93 L108.0,772.93 L108.5,772.92 L109.0,772.92 L109.5,772.91 L110.0,772.91 L110.5,772.91 L111.0,772.90 L111.5,772.90 L112.0,772.89 L112.5,772.89 L113.0,772.89 L113.5,772.88 L114.0,772.88 L114.5,772.87 L115.0,772.87 L115.5,772.86 L116.0,772.86 L116.5,772.85 L117.0,772.85 L117.5,772.84 L118.0,772.84 L118.5,772.83 L119.0,772.83 L119.5,772.82 L120.0,772.82 L120.5,772.81 L121.0,772.81 L121.5,772.80 L122.0,772.79 L122.5,772.79 L123.0,772.78 L123.5,772.78 L124.0,772.77 L124.5,772.76 L125.0,772.76 L125.5,772.75 L126.0,772.74 L126.5,772.74 L127.0,772.73 L127.5,772.72 L128.0,772.71 L128.5,772.71 L129.0,772.70 L129.5,772.69 L130.0,772.68 L130.5,772.68 L131.0,772.67 L131.5,772.66 L132.0,772.65 L132.5,772.64 L133.0,772.63 L133.5,772.62 L134.0,772.61 L134.5,772.61 L135.0,772.60 L135.5,772.59 L136.0,772.58 L136.5,772.57 L137.0,772.56 L137.5,772.55 L138.0,772.54 L138.5,772.53 L139.0,772.51 L139.5,772.50 L140.0,772.49 L140.5,772.48 L141.0,772.47 L141.5,772.46 L142.0,772.45 L142.5,772.43 L143.0,772.42 L143.5,772.41 L144.0,772.40 L144.5,772.38 L145.0,772.37 L145.5,772.36 L146.0,772.34 L146.5,772.33 L147.0,772.31 L147.5,772.30 L148.0,772.28 L148.5,772.27 L149.0,772.25 L149.5,772.24 L150.0,772.22 L150.5,772.21 L151.0,772.19 L151.5,772.17 L152.0,772.16 L152.5,772.14 L153.0,772.12 L153.5,772.11 L154.0,772.09 L154.5,772.07 L155.0,772.05 L155.5,772.03 L156.0,772.01 L156.5,771.99 L157.0,771.98 L157.5,771.96 L158.0,771.93 L158.5,771.91 L159.0,771.89 L159.5,771.87 L160.0,771.85 L160.5,771.83 L161.0,771.81 L161.5,771.78 L162.0,771.76 L162.5,771.74 L163.0,771.71 L163.5,771.69 L164.0,771.66 L164.5,771.64 L165.0,771.61 L165.5,771.59 L166.0,771.56 L166.5,771.54 L167.0,771.51 L167.5,771.48 L168.0,771.45 L168.5,771.43 L169.0,771.40 L169.5,771.37 L170.0,771.34 L170.5,771.31 L171.0,771.28 L171.5,771.25 L172.0,771.22 L172.5,771.18 L173.0,771.15 L173.5,771.12 L174.0,771.09 L174.5,771.05 L175.0,771.02 L175.5,770.98 L176.0,770.95 L176.5,770.91 L177.0,770.88 L177.5,770.84 L178.0,770.80 L178.5,770.76 L179.0,770.72 L179.5,770.69 L180.0,770.65 L180.5,770.61 L181.0,770.56 L181.5,770.52 L182.0,770.48 L182.5,770.44 L183.0,770.39 L183.5,770.35 L184.0,770.31 L184.5,770.26 L185.0,770.21 L185.5,770.17 L186.0,770.12 L186.5,770.07 L187.0,770.02 L187.5,769.98 L188.0,769.93 L188.5,769.87 L189.0,769.82 L189.5,769.77 L190.0,769.72 L190.5,769.66 L191.0,769.61 L191.5,769.56 L192.0,769.50 L192.5,769.44 L193.0,769.39 L193.5,769.33 L194.0,769.27 L194.5,769.21 L195.0,769.15 L195.5,769.09 L196.0,769.02 L196.5,768.96 L197.0,768.90 L197.5,768.83 L198.0,768.77 L198.5,768.70 L199.0,768.63 L199.5,768.56 L200.0,768.49 L200.5,768.42 L201.0,768.35 L201.5,768.28 L202.0,768.21 L202.5,768.13 L203.0,768.06 L203.5,767.98 L204.0,767.90 L204.5,767.83 L205.0,767.75 L205.5,767.67 L206.0,767.59 L206.5,767.50 L207.0,767.42 L207.5,767.34 L208.0,767.25 L208.5,767.16 L209.0,767.08 L209.5,766.99 L210.0,766.90 L210.5,766.81 L211.0,766.71 L211.5,766.62 L212.0,766.53 L212.5,766.43 L213.0,766.33 L213.5,766.23 L214.0,766.13 L214.5,766.03 L215.0,765.93 L215.5,765.83 L216.0,765.72 L216.5,765.62 L217.0,765.51 L217.5,765.40 L218.0,765.29 L218.5,765.18 L219.0,765.07 L219.5,764.96 L220.0,764.84 L220.5,764.72 L221.0,764.61 L221.5,764.49 L222.0,764.37 L222.5,764.24 L223.0,764.12 L223.5,764.00 L224.0,763.87 L224.5,763.74 L225.0,763.61 L225.5,763.48 L226.0,763.35 L226.5,763.21 L227.0,763.08 L227.5,762.94 L228.0,762.80 L228.5,762.66 L229.0,762.52 L229.5,762.37 L230.0,762.23 L230.5,762.08 L231.0,761.93 L231.5,761.78 L232.0,761.63 L232.5,761.48 L233.0,761.32 L233.5,761.16 L234.0,761.00 L234.5,760.84 L235.0,760.68 L235.5,760.52 L236.0,760.35 L236.5,760.18 L237.0,760.01 L237.5,759.84 L238.0,759.67 L238.5,759.49 L239.0,759.31 L239.5,759.13 L240.0,758.95 L240.5,758.77 L241.0,758.58 L241.5,758.40 L242.0,758.21 L242.5,758.02 L243.0,757.82 L243.5,757.63 L244.0,757.43 L244.5,757.23 L245.0,757.03 L245.5,756.82 L246.0,756.62 L246.5,756.41 L247.0,756.20 L247.5,755.99 L248.0,755.78 L248.5,755.56 L249.0,755.34 L249.5,755.12 L250.0,754.90 L250.5,754.67 L251.0,754.44 L251.5,754.21 L252.0,753.98 L252.5,753.75 L253.0,753.51 L253.5,753.27 L254.0,753.03 L254.5,752.79 L255.0,752.54 L255.5,752.29 L256.0,752.04 L256.5,751.79 L257.0,751.53 L257.5,751.27 L258.0,751.01 L258.5,750.75 L259.0,750.48 L259.5,750.21 L260.0,749.94 L260.5,749.67 L261.0,749.39 L261.5,749.12 L262.0,748.83 L262.5,748.55 L263.0,748.26 L263.5,747.98 L264.0,747.68 L264.5,747.39 L265.0,747.09 L265.5,746.79 L266.0,746.49 L266.5,746.19 L267.0,745.88 L267.5,745.57 L268.0,745.26 L268.5,744.94 L269.0,744.62 L269.5,744.30 L270.0,743.98 L270.5,743.65 L271.0,743.32 L271.5,742.99 L272.0,742.65 L272.5,742.31 L273.0,741.97 L273.5,741.63 L274.0,741.28 L274.5,740.93 L275.0,740.58 L275.5,740.22 L276.0,739.86 L276.5,739.50 L277.0,739.14 L277.5,738.77 L278.0,738.40 L278.5,738.03 L279.0,737.65 L279.5,737.27 L280.0,736.89 L280.5,736.50 L281.0,736.11 L281.5,735.72 L282.0,735.33 L282.5,734.93 L283.0,734.53 L283.5,734.12 L284.0,733.72 L284.5,733.31 L285.0,732.89 L285.5,732.48 L286.0,732.06 L286.5,731.63 L287.0,731.21 L287.5,730.78 L288.0,730.35 L288.5,729.91 L289.0,729.47 L289.5,729.03 L290.0,728.58 L290.5,728.14 L291.0,727.68 L291.5,727.23 L292.0,726.77 L292.5,726.31 L293.0,725.85 L293.5,725.38 L294.0,724.91 L294.5,724.43 L295.0,723.95 L295.5,723.47 L296.0,722.99 L296.5,722.50 L297.0,722.01 L297.5,721.52 L298.0,721.02 L298.5,720.52 L299.0,720.02 L299.5,719.51 L300.0,719.00 L300.5,718.48 L301.0,717.97 L301.5,717.45 L302.0,716.92 L302.5,716.40 L303.0,715.86 L303.5,715.33 L304.0,714.79 L304.5,714.25 L305.0,713.71 L305.5,713.16 L306.0,712.61 L306.5,712.06 L307.0,711.50 L307.5,710.94 L308.0,710.38 L308.5,709.81 L309.0,709.24 L309.5,708.67 L310.0,708.09 L310.5,707.51 L311.0,706.93 L311.5,706.34 L312.0,705.75 L312.5,705.16 L313.0,704.56 L313.5,703.96 L314.0,703.36 L314.5,702.75 L315.0,702.14 L315.5,701.53 L316.0,700.91 L316.5,700.29 L317.0,699.67 L317.5,699.05 L318.0,698.42 L318.5,697.79 L319.0,697.15 L319.5,696.51 L320.0,695.87 L320.5,695.23 L321.0,694.58 L321.5,693.93 L322.0,693.27 L322.5,692.62 L323.0,691.96 L323.5,691.29 L324.0,690.63 L324.5,689.96 L325.0,689.28 L325.5,688.61 L326.0,687.93 L326.5,687.25 L327.0,686.56 L327.5,685.88 L328.0,685.19 L328.5,684.49 L329.0,683.80 L329.5,683.10 L330.0,682.39 L330.5,681.69 L331.0,680.98 L331.5,680.27 L332.0,679.56 L332.5,678.84 L333.0,678.12 L333.5,677.40 L334.0,676.67 L334.5,675.95 L335.0,675.22 L335.5,674.48 L336.0,673.75 L336.5,673.01 L337.0,672.27 L337.5,671.53 L338.0,670.78 L338.5,670.03 L339.0,669.28 L339.5,668.53 L340.0,667.77 L340.5,667.01 L341.0,666.25 L341.5,665.49 L342.0,664.73 L342.5,663.96 L343.0,663.19 L343.5,662.41 L344.0,661.64 L344.5,660.86 L345.0,660.08 L345.5,659.30 L346.0,658.52 L346.5,657.73 L347.0,656.95 L347.5,656.16 L348.0,655.37 L348.5,654.57 L349.0,653.78 L349.5,652.98 L350.0,652.18 L350.5,651.38 L351.0,650.58 L351.5,649.77 L352.0,648.97 L352.5,648.16 L353.0,647.35 L353.5,646.54 L354.0,645.72 L354.5,644.91 L355.0,644.09 L355.5,643.27 L356.0,642.46 L356.5,641.63 L357.0,640.81 L357.5,639.99 L358.0,639.16 L358.5,638.34 L359.0,637.51 L359.5,636.68 L360.0,635.85 L360.5,635.02 L361.0,634.19 L361.5,633.36 L362.0,632.53 L362.5,631.69 L363.0,630.86 L363.5,630.02 L364.0,629.18 L364.5,628.34 L365.0,627.51 L365.5,626.67 L366.0,625.83 L366.5,624.99 L367.0,624.14 L367.5,623.30 L368.0,622.46 L368.5,621.62 L369.0,620.78 L369.5,619.93 L370.0,619.09 L370.5,618.25 L371.0,617.40 L371.5,616.56 L372.0,615.71 L372.5,614.87 L373.0,614.02 L373.5,613.18 L374.0,612.34 L374.5,611.49 L375.0,610.65 L375.5,609.81 L376.0,608.96 L376.5,608.12 L377.0,607.28 L377.5,606.44 L378.0,605.59 L378.5,604.75 L379.0,603.91 L379.5,603.07 L380.0,602.23 L380.5,601.40 L381.0,600.56 L381.5,599.72 L382.0,598.89 L382.5,598.05 L383.0,597.22 L383.5,596.39 L384.0,595.55 L384.5,594.72 L385.0,593.90 L385.5,593.07 L386.0,592.24 L386.5,591.42 L387.0,590.59 L387.5,589.77 L388.0,588.95 L388.5,588.13 L389.0,587.31 L389.5,586.50 L390.0,585.68 L390.5,584.87 L391.0,584.06 L391.5,583.25 L392.0,582.45 L392.5,581.64 L393.0,580.84 L393.5,580.04 L394.0,579.24 L394.5,578.45 L395.0,577.66 L395.5,576.86 L396.0,576.08 L396.5,575.29 L397.0,574.51 L397.5,573.73 L398.0,572.95 L398.5,572.17 L399.0,571.40 L399.5,570.63 L400.0,569.86 L400.5,569.10 L401.0,568.34 L401.5,567.58 L402.0,566.82 L402.5,566.07 L403.0,565.32 L403.5,564.58 L404.0,563.83 L404.5,563.09 L405.0,562.36 L405.5,561.63 L406.0,560.90 L406.5,560.17 L407.0,559.45 L407.5,558.73 L408.0,558.02 L408.5,557.31 L409.0,556.60 L409.5,555.90 L410.0,555.20 L410.5,554.51 L411.0,553.82 L411.5,553.13 L412.0,552.45 L412.5,551.77 L413.0,551.09 L413.5,550.42 L414.0,549.76 L414.5,549.10 L415.0,548.44 L415.5,547.79 L416.0,547.14 L416.5,546.50 L417.0,545.86 L417.5,545.23 L418.0,544.60 L418.5,543.97 L419.0,543.35 L419.5,542.74 L420.0,542.13 L420.5,541.53 L421.0,540.93 L421.5,540.33 L422.0,539.74 L422.5,539.16 L423.0,538.58 L423.5,538.01 L424.0,537.44 L424.5,536.88 L425.0,536.32 L425.5,535.77 L426.0,535.22 L426.5,534.68 L427.0,534.14 L427.5,533.61 L428.0,533.09 L428.5,532.57 L429.0,532.06 L429.5,531.55 L430.0,531.05 L430.5,530.56 L431.0,530.07 L431.5,529.58 L432.0,529.11 L432.5,528.64 L433.0,528.17 L433.5,527.71 L434.0,527.26 L434.5,526.81 L435.0,526.37 L435.5,525.94 L436.0,525.51 L436.5,525.09 L437.0,524.67 L437.5,524.26 L438.0,523.86 L438.5,523.47 L439.0,523.08 L439.5,522.69 L440.0,522.32 L440.5,521.95 L441.0,521.58 L441.5,521.23 L442.0,520.88 L442.5,520.53 L443.0,520.20 L443.5,519.87 L444.0,519.55 L444.5,519.23 L445.0,518.92 L445.5,518.62 L446.0,518.32 L446.5,518.03 L447.0,517.75 L447.5,517.48 L448.0,517.21 L448.5,516.95 L449.0,516.70 L449.5,516.45 L450.0,516.21 L450.5,515.98 L451.0,515.75 L451.5,515.54 L452.0,515.33 L452.5,515.12 L453.0,514.93 L453.5,514.74 L454.0,514.55 L454.5,514.38 L455.0,514.21 L455.5,514.05 L456.0,513.90 L456.5,513.75 L457.0,513.62 L457.5,513.48 L458.0,513.36 L458.5,513.24 L459.0,513.14 L459.5,513.03 L460.0,512.94 L460.5,512.85 L461.0,512.77 L461.5,512.70 L462.0,512.64 L462.5,512.58 L463.0,512.53 L463.5,512.49 L464.0,512.45 L464.5,512.43 L465.0,512.41 L465.5,512.39 L466.0,512.39 L466.5,512.39 L467.0,512.40 L467.5,512.42 L468.0,512.44 L468.5,512.47 L469.0,512.51 L469.5,512.56 L470.0,512.61 L470.5,512.68 L471.0,512.74 L471.5,512.82 L472.0,512.90 L472.5,513.00 L473.0,513.09 L473.5,513.20 L474.0,513.31 L474.5,513.43 L475.0,513.56 L475.5,513.70 L476.0,513.84 L476.5,513.99 L477.0,514.15 L477.5,514.31 L478.0,514.48 L478.5,514.66 L479.0,514.85 L479.5,515.04 L480.0,515.24 L480.5,515.45 L481.0,515.67 L481.5,515.89 L482.0,516.12 L482.5,516.35 L483.0,516.60 L483.5,516.85 L484.0,517.11 L484.5,517.37 L485.0,517.64 L485.5,517.92 L486.0,518.21 L486.5,518.50 L487.0,518.80 L487.5,519.11 L488.0,519.42 L488.5,519.74 L489.0,520.07 L489.5,520.40 L490.0,520.74 L490.5,521.09 L491.0,521.44 L491.5,521.80 L492.0,522.17 L492.5,522.54 L493.0,522.92 L493.5,523.31 L494.0,523.70 L494.5,524.10 L495.0,524.51 L495.5,524.92 L496.0,525.34 L496.5,525.77 L497.0,526.20 L497.5,526.64 L498.0,527.08 L498.5,527.53 L499.0,527.99 L499.5,528.45 L500.0,528.92 L500.5,529.39 L501.0,529.87 L501.5,530.36 L502.0,530.85 L502.5,531.35 L503.0,531.86 L503.5,532.37 L504.0,532.88 L504.5,533.40 L505.0,533.93 L505.5,534.47 L506.0,535.00 L506.5,535.55 L507.0,536.10 L507.5,536.65 L508.0,537.21 L508.5,537.78 L509.0,538.35 L509.5,538.93 L510.0,539.51 L510.5,540.10 L511.0,540.69 L511.5,541.29 L512.0,541.89 L512.5,542.50 L513.0,543.11 L513.5,543.73 L514.0,544.35 L514.5,544.97 L515.0,545.61 L515.5,546.24 L516.0,546.88 L516.5,547.53 L517.0,548.18 L517.5,548.83 L518.0,549.49 L518.5,550.16 L519.0,550.83 L519.5,551.50 L520.0,552.17 L520.5,552.86 L521.0,553.54 L521.5,554.23 L522.0,554.92 L522.5,555.62 L523.0,556.32 L523.5,557.03 L524.0,557.73 L524.5,558.45 L525.0,559.16 L525.5,559.88 L526.0,560.61 L526.5,561.33 L527.0,562.07 L527.5,562.80 L528.0,563.54 L528.5,564.28 L529.0,565.02 L529.5,565.77 L530.0,566.52 L530.5,567.28 L531.0,568.03 L531.5,568.79 L532.0,569.56 L532.5,570.32 L533.0,571.09 L533.5,571.86 L534.0,572.64 L534.5,573.41 L535.0,574.19 L535.5,574.98 L536.0,575.76 L536.5,576.55 L537.0,577.34 L537.5,578.13 L538.0,578.93 L538.5,579.72 L539.0,580.52 L539.5,581.32 L540.0,582.13 L540.5,582.93 L541.0,583.74 L541.5,584.55 L542.0,585.36 L542.5,586.17 L543.0,586.99 L543.5,587.80 L544.0,588.62 L544.5,589.44 L545.0,590.26 L545.5,591.09 L546.0,591.91 L546.5,592.74 L547.0,593.56 L547.5,594.39 L548.0,595.22 L548.5,596.05 L549.0,596.89 L549.5,597.72 L550.0,598.55 L550.5,599.39 L551.0,600.22 L551.5,601.06 L552.0,601.90 L552.5,602.74 L553.0,603.58 L553.5,604.42 L554.0,605.26 L554.5,606.10 L555.0,606.94 L555.5,607.78 L556.0,608.63 L556.5,609.47 L557.0,610.31 L557.5,611.16 L558.0,612.00 L558.5,612.84 L559.0,613.69 L559.5,614.53 L560.0,615.38 L560.5,616.22 L561.0,617.06 L561.5,617.91 L562.0,618.75 L562.5,619.59 L563.0,620.44 L563.5,621.28 L564.0,622.12 L564.5,622.97 L565.0,623.81 L565.5,624.65 L566.0,625.49 L566.5,626.33 L567.0,627.17 L567.5,628.01 L568.0,628.85 L568.5,629.68 L569.0,630.52 L569.5,631.36 L570.0,632.19 L570.5,633.03 L571.0,633.86 L571.5,634.69 L572.0,635.52 L572.5,636.35 L573.0,637.18 L573.5,638.01 L574.0,638.83 L574.5,639.66 L575.0,640.48 L575.5,641.31 L576.0,642.13 L576.5,642.95 L577.0,643.77 L577.5,644.58 L578.0,645.40 L578.5,646.21 L579.0,647.02 L579.5,647.83 L580.0,648.64 L580.5,649.45 L581.0,650.25 L581.5,651.06 L582.0,651.86 L582.5,652.66 L583.0,653.46 L583.5,654.25 L584.0,655.05 L584.5,655.84 L585.0,656.63 L585.5,657.42 L586.0,658.21 L586.5,658.99 L587.0,659.77 L587.5,660.55 L588.0,661.33 L588.5,662.11 L589.0,662.88 L589.5,663.65 L590.0,664.42 L590.5,665.18 L591.0,665.95 L591.5,666.71 L592.0,667.47 L592.5,668.23 L593.0,668.98 L593.5,669.73 L594.0,670.48 L594.5,671.23 L595.0,671.97 L595.5,672.71 L596.0,673.45 L596.5,674.19 L597.0,674.92 L597.5,675.66 L598.0,676.38 L598.5,677.11 L599.0,677.83 L599.5,678.55 L600.0,679.27 L600.5,679.98 L601.0,680.70 L601.5,681.41 L602.0,682.11 L602.5,682.82 L603.0,683.52 L603.5,684.21 L604.0,684.91 L604.5,685.60 L605.0,686.29 L605.5,686.97 L606.0,687.66 L606.5,688.34 L607.0,689.01 L607.5,689.69 L608.0,690.36 L608.5,691.03 L609.0,691.69 L609.5,692.35 L610.0,693.01 L610.5,693.67 L611.0,694.32 L611.5,694.97 L612.0,695.61 L612.5,696.26 L613.0,696.90 L613.5,697.53 L614.0,698.17 L614.5,698.80 L615.0,699.42 L615.5,700.05 L616.0,700.67 L616.5,701.28 L617.0,701.90 L617.5,702.51 L618.0,703.12 L618.5,703.72 L619.0,704.32 L619.5,704.92 L620.0,705.51 L620.5,706.11 L621.0,706.69 L621.5,707.28 L622.0,707.86 L622.5,708.44 L623.0,709.01 L623.5,709.58 L624.0,710.15 L624.5,710.72 L625.0,711.28 L625.5,711.84 L626.0,712.39 L626.5,712.94 L627.0,713.49 L627.5,714.04 L628.0,714.58 L628.5,715.12 L629.0,715.65 L629.5,716.18 L630.0,716.71 L630.5,717.24 L631.0,717.76 L631.5,718.28 L632.0,718.79 L632.5,719.30 L633.0,719.81 L633.5,720.32 L634.0,720.82 L634.5,721.32 L635.0,721.81 L635.5,722.31 L636.0,722.80 L636.5,723.28 L637.0,723.76 L637.5,724.24 L638.0,724.72 L638.5,725.19 L639.0,725.66 L639.5,726.12 L640.0,726.59 L640.5,727.05 L641.0,727.50 L641.5,727.96 L642.0,728.41 L642.5,728.85 L643.0,729.30 L643.5,729.74 L644.0,730.17 L644.5,730.61 L645.0,731.04 L645.5,731.46 L646.0,731.89 L646.5,732.31 L647.0,732.73 L647.5,733.14 L648.0,733.55 L648.5,733.96 L649.0,734.37 L649.5,734.77 L650.0,735.17 L650.5,735.56 L651.0,735.96 L651.5,736.35 L652.0,736.73 L652.5,737.12 L653.0,737.50 L653.5,737.88 L654.0,738.25 L654.5,738.62 L655.0,738.99 L655.5,739.36 L656.0,739.72 L656.5,740.08 L657.0,740.44 L657.5,740.79 L658.0,741.14 L658.5,741.49 L659.0,741.84 L659.5,742.18 L660.0,742.52 L660.5,742.85 L661.0,743.19 L661.5,743.52 L662.0,743.85 L662.5,744.17 L663.0,744.49 L663.5,744.81 L664.0,745.13 L664.5,745.44 L665.0,745.76 L665.5,746.06 L666.0,746.37 L666.5,746.67 L667.0,746.97 L667.5,747.27 L668.0,747.57 L668.5,747.86 L669.0,748.15 L669.5,748.44 L670.0,748.72 L670.5,749.00 L671.0,749.28 L671.5,749.56 L672.0,749.83 L672.5,750.11 L673.0,750.38 L673.5,750.64 L674.0,750.91 L674.5,751.17 L675.0,751.43 L675.5,751.68 L676.0,751.94 L676.5,752.19 L677.0,752.44 L677.5,752.69 L678.0,752.93 L678.5,753.17 L679.0,753.41 L679.5,753.65 L680.0,753.89 L680.5,754.12 L681.0,754.35 L681.5,754.58 L682.0,754.81 L682.5,755.03 L683.0,755.25 L683.5,755.47 L684.0,755.69 L684.5,755.90 L685.0,756.12 L685.5,756.33 L686.0,756.54 L686.5,756.74 L687.0,756.95 L687.5,757.15 L688.0,757.35 L688.5,757.55 L689.0,757.74 L689.5,757.94 L690.0,758.13 L690.5,758.32 L691.0,758.51 L691.5,758.69 L692.0,758.88 L692.5,759.06 L693.0,759.24 L693.5,759.42 L694.0,759.60 L694.5,759.77 L695.0,759.94 L695.5,760.11 L696.0,760.28 L696.5,760.45 L697.0,760.61 L697.5,760.78 L698.0,760.94 L698.5,761.10 L699.0,761.26 L699.5,761.41 L700.0,761.57 L700.5,761.72 L701.0,761.87 L701.5,762.02 L702.0,762.17 L702.5,762.32 L703.0,762.46 L703.5,762.60 L704.0,762.74 L704.5,762.88 L705.0,763.02 L705.5,763.16 L706.0,763.29 L706.5,763.43 L707.0,763.56 L707.5,763.69 L708.0,763.82 L708.5,763.94 L709.0,764.07 L709.5,764.19 L710.0,764.32 L710.5,764.44 L711.0,764.56 L711.5,764.68 L712.0,764.79 L712.5,764.91 L713.0,765.02 L713.5,765.14 L714.0,765.25 L714.5,765.36 L715.0,765.47 L715.5,765.58 L716.0,765.68 L716.5,765.79 L717.0,765.89 L717.5,765.99 L718.0,766.09 L718.5,766.19 L719.0,766.29 L719.5,766.39 L720.0,766.49 L720.5,766.58 L721.0,766.68 L721.5,766.77 L722.0,766.86 L722.5,766.95 L723.0,767.04 L723.5,767.13 L724.0,767.22 L724.5,767.30 L725.0,767.39 L725.5,767.47 L726.0,767.55 L726.5,767.63 L727.0,767.72 L727.5,767.79 L728.0,767.87 L728.5,767.95 L729.0,768.03 L729.5,768.10 L730.0,768.18 L730.5,768.25 L731.0,768.32 L731.5,768.40 L732.0,768.47 L732.5,768.54 L733.0,768.60 L733.5,768.67 L734.0,768.74 L734.5,768.81 L735.0,768.87 L735.5,768.94 L736.0,769.00 L736.5,769.06 L737.0,769.12 L737.5,769.18 L738.0,769.24 L738.5,769.30 L739.0,769.36 L739.5,769.42 L740.0,769.48 L740.5,769.53 L741.0,769.59 L741.5,769.64 L742.0,769.70 L742.5,769.75 L743.0,769.80 L743.5,769.85 L744.0,769.91 L744.5,769.96 L745.0,770.00 L745.5,770.05 L746.0,770.10 L746.5,770.15 L747.0,770.20 L747.5,770.24 L748.0,770.29 L748.5,770.33 L749.0,770.38 L749.5,770.42 L750.0,770.46 L750.5,770.51 L751.0,770.55 L751.5,770.59 L752.0,770.63 L752.5,770.67 L753.0,770.71 L753.5,770.75 L754.0,770.79 L754.5,770.82 L755.0,770.86 L755.5,770.90 L756.0,770.93 L756.5,770.97 L757.0,771.00 L757.5,771.04 L758.0,771.07 L758.5,771.11 L759.0,771.14 L759.5,771.17 L760.0,771.20 L760.5,771.23 L761.0,771.27 L761.5,771.30 L762.0,771.33 L762.5,771.36 L763.0,771.39 L763.5,771.41 L764.0,771.44 L764.5,771.47 L765.0,771.50 L765.5,771.53 L766.0,771.55 L766.5,771.58 L767.0,771.60 L767.5,771.63 L768.0,771.65 L768.5,771.68 L769.0,771.70 L769.5,771.73 L770.0,771.75 L770.5,771.77 L771.0,771.80 L771.5,771.82 L772.0,771.84 L772.5,771.86 L773.0,771.88 L773.5,771.91 L774.0,771.93 L774.5,771.95 L775.0,771.97 L775.5,771.99 L776.0,772.01 L776.5,772.03 L777.0,772.04 L777.5,772.06 L778.0,772.08 L778.5,772.10 L779.0,772.12 L779.5,772.13 L780.0,772.15 L780.5,772.17 L781.0,772.18 L781.5,772.20 L782.0,772.22 L782.5,772.23 L783.0,772.25 L783.5,772.26 L784.0,772.28 L784.5,772.29 L785.0,772.31 L785.5,772.32 L786.0,772.34 L786.5,772.35 L787.0,772.36 L787.5,772.38 L788.0,772.39 L788.5,772.40 L789.0,772.42 L789.5,772.43 L790.0,772.44 L790.5,772.45 L791.0,772.46 L791.5,772.48 L792.0,772.49 L792.5,772.50 L793.0,772.51 L793.5,772.52 L794.0,772.53 L794.5,772.54 L795.0,772.55 L795.5,772.56 L796.0,772.57 L796.5,772.58 L797.0,772.59 L797.5,772.60 L798.0,772.61 L798.5,772.62 L799.0,772.63 L799.5,772.64 L800.0,772.65 L800.5,772.66 L801.0,772.66 L801.5,772.67 L802.0,772.68 L802.5,772.69 L803.0,772.70 L803.5,772.70 L804.0,772.71 L804.5,772.72 L805.0,772.73 L805.5,772.73 L806.0,772.74 L806.5,772.75 L807.0,772.75 L807.5,772.76 L808.0,772.77 L808.5,772.77 L809.0,772.78 L809.5,772.79 L810.0,772.79 L810.5,772.80 L811.0,772.80 L811.5,772.81 L812.0,772.82 L812.5,772.82 L813.0,772.83 L813.5,772.83 L814.0,772.84 L814.5,772.84 L815.0,772.85 L815.5,772.85 L816.0,772.86 L816.5,772.86 L817.0,772.87 L817.5,772.87 L818.0,772.88 L818.5,772.88 L819.0,772.88 L819.5,772.89 L820.0,772.89 L820.5,772.90 L821.0,772.90 L821.5,772.91 L822.0,772.91 L822.5,772.91 L823.0,772.92 L823.5,772.92 L824.0,772.92 L824.5,772.93 L825.0,772.93 L825.5,772.93 L826.0,772.94 L826.5,772.94 L827.0,772.94 L827.5,772.95 L828.0,772.95 L828.5,772.95 L829.0,772.96 L829.5,772.96 L830.0,772.96 L830.5,772.97 L831.0,772.97 L831.5,772.97 L832.0,772.97 L832.5,772.98 L833.0,772.98 L833.5,772.98 L834.0,772.98 L834.5,772.99 L835.0,772.99 L835.5,772.99 L836.0,772.99 L836.5,773.00 L837.0,773.00 L837.5,773.00 L838.0,773.00 L838.5,773.00 L839.0,773.01 L839.5,773.01 L840.0,773.01 L840.5,773.01 L841.0,773.01 L841.5,773.02 L842.0,773.02 L842.5,773.02 L843.0,773.02"/>
<text transform="translate(72 472) scale(1 1.1)" text-anchor="end">100.00%</text>
<text transform="translate(72 533) scale(1 1.1)" text-anchor="end">80.00%</text>
<text transform="translate(72 594) scale(1 1.1)" text-anchor="end">60.00%</text>
<text transform="translate(72 656) scale(1 1.1)" text-anchor="end">40.00%</text>
<text transform="translate(72 717) scale(1 1.1)" text-anchor="end">20.00%</text>
<text transform="translate(72 778) scale(1 1.1)" text-anchor="end">0.00%</text>
<text transform="translate(75 793) scale(1 1.1)" text-anchor="middle">0.0 um</text>
<text transform="translate(228 793) scale(1 1.1)" text-anchor="middle">1195.7 um</text>
<text transform="translate(382 793) scale(1 1.1)" text-anchor="middle">2391.4 um</text>
<text transform="translate(536 793) scale(1 1.1)" text-anchor="middle">3587.1 um</text>
<text transform="translate(690 793) scale(1 1.1)" text-anchor="middle">4782.8 um</text>
<text transform="translate(843 793) scale(1 1.1)" text-anchor="middle">5978.5 um</text>
</g>
</svg>
<svg width="919" height="60" style="position:absolute;left:0;top:0" font-family="Liberation Sans, sans-serif">
<defs>
<linearGradient id="bg" x1="0" y1="0" x2="0" y2="1">
<stop offset="0" stop-color="#8cb6bc"/><stop offset="0.12" stop-color="#6aa2ae"/><stop offset="0.3" stop-color="#4890a0"/><stop offset="0.38" stop-color="#3a8494"/>
<stop offset="0.43" stop-color="#1e5664"/><stop offset="0.48" stop-color="#0c2630"/><stop offset="0.62" stop-color="#070b0f"/><stop offset="1" stop-color="#050606"/>
</linearGradient>
<linearGradient id="fl" x1="0" y1="0" x2="0" y2="1">
<stop offset="0" stop-color="#3e4042"/><stop offset="0.38" stop-color="#383a3c"/><stop offset="0.42" stop-color="#1c1d1e"/><stop offset="0.8" stop-color="#121212"/><stop offset="1" stop-color="#080808"/>
</linearGradient>
<linearGradient id="lens" x1="0" y1="0" x2="0" y2="1">
<stop offset="0" stop-color="#7aa6f2"/><stop offset="0.5" stop-color="#3a86ee"/><stop offset="1" stop-color="#2fb8f4"/>
</linearGradient>
</defs>
<g transform="translate(570 0)">
<rect x="0.5" y="1.5" width="47" height="47" rx="5" fill="#000" stroke="#f5869a"/>
<rect x="4.5" y="5.5" width="40" height="39" rx="1.5" fill="url(#bg)" stroke="#eebcc0" stroke-width="1.1"/>
<rect x="7.5" y="8.5" width="32" height="32" rx="5" fill="url(#fl)" stroke="#f6dfe0" stroke-width="1.4"/>
 <rect x="12" y="13" width="4" height="3" fill="#f4dede"/>
 <rect x="15" y="28.2" width="18.2" height="10.4" fill="#d2e0e0" stroke="#f0c4c4" stroke-width="1"/>
 <rect x="17" y="30" width="3.5" height="7" fill="#111"/>
</g>
<g transform="translate(620 0)">
<rect x="0.5" y="1.5" width="47" height="47" rx="5" fill="#000" stroke="#f5869a"/>
<rect x="4.5" y="5.5" width="40" height="39" rx="1.5" fill="url(#bg)" stroke="#eebcc0" stroke-width="1.1"/>
<path d="M10.2 38.2 L18 30.4" stroke="#e8c8cc" stroke-width="2.8" stroke-linecap="round"/>
 <circle cx="27.4" cy="21.3" r="10.5" fill="url(#lens)" stroke="#efd2d6" stroke-width="2.7"/>
</g>
<g transform="translate(670 0)">
<rect x="0.5" y="1.5" width="47" height="47" rx="5" fill="#000" stroke="#f5869a"/>
<rect x="4.5" y="5.5" width="40" height="39" rx="1.5" fill="url(#bg)" stroke="#eebcc0" stroke-width="1.1"/>
<path d="M6.90,38.80 L7.40,38.35 L7.90,37.86 L8.40,37.34 L8.90,36.78 L9.40,36.19 L9.90,35.57 L10.40,34.93 L10.90,34.26 L11.40,33.57 L11.90,32.86 L12.40,32.14 L12.90,31.40 L13.40,30.62 L13.90,29.78 L14.40,28.89 L14.90,27.96 L15.40,27.00 L15.90,26.00 L16.40,24.96 L16.90,23.88 L17.40,22.74 L17.90,21.55 L18.40,20.24 L18.90,18.83 L19.40,17.45 L19.90,16.03 L20.40,14.80 L20.90,13.88 L21.40,13.08 L21.90,12.47 L22.40,12.08 L22.90,11.73 L23.40,11.46 L23.90,11.31 L24.40,11.33 L24.90,11.51 L25.40,11.79 L25.90,12.15 L26.40,12.58 L26.90,13.23 L27.40,14.05 L27.90,15.02 L28.40,16.31 L28.90,17.73 L29.40,19.11 L29.90,20.52 L30.40,21.79 L30.90,22.97 L31.40,24.10 L31.90,25.18 L32.40,26.20 L32.90,27.19 L33.40,28.15 L33.90,29.07 L34.40,29.96 L34.90,30.78 L35.40,31.55 L35.90,32.28 L36.40,33.01 L36.90,33.71 L37.40,34.39 L37.90,35.06 L38.40,35.70 L38.90,36.31 L39.40,36.89 L39.90,37.44 L40.40,37.96 L40.90,38.44" fill="none" stroke="#f6dfe0" stroke-width="2.4" stroke-linecap="round" stroke-linejoin="round"/>
</g>
<g transform="translate(720 0)">
<rect x="0.5" y="1.5" width="47" height="47" rx="5" fill="#000" stroke="#f5869a"/>
<rect x="4.5" y="5.5" width="40" height="39" rx="1.5" fill="url(#bg)" stroke="#eebcc0" stroke-width="1.1"/>
<text x="24.3" y="21.6" text-anchor="middle" font-size="14" font-weight="bold" fill="#f6dfe0" stroke="#f6dfe0" stroke-width="0.35">SEMI</text>
 <text x="24.8" y="38.1" text-anchor="middle" font-size="14.2" font-weight="bold" fill="#f6dfe0" stroke="#f6dfe0" stroke-width="0.35">LOG</text>
</g>
<g transform="translate(770 0)">
<rect x="0.5" y="1.5" width="47" height="47" rx="5" fill="#000" stroke="#f5869a"/>
<rect x="4.5" y="5.5" width="40" height="39" rx="1.5" fill="url(#bg)" stroke="#eebcc0" stroke-width="1.1"/>
<path d="M9.5 36.7 C17.5 36.7, 20.5 31, 23.8 25 S 31 12.7, 39.2 12.7" fill="none" stroke="#f6dfe0" stroke-width="3" stroke-linecap="round"/>
 <rect x="22.4" y="9" width="3.4" height="31.2" fill="#eeea22"/>
 <circle cx="24.1" cy="25.2" r="3.8" fill="#eeea22"/>
</g>
<g transform="translate(820 0)">
<rect x="0.5" y="1.5" width="47" height="47" rx="5" fill="#000" stroke="#f5869a"/>
<rect x="4.5" y="5.5" width="40" height="39" rx="1.5" fill="url(#bg)" stroke="#eebcc0" stroke-width="1.1"/>
<text x="0" y="0" font-size="15.8" font-weight="bold" fill="#f6dfe0" stroke="#f6dfe0" stroke-width="0.35" text-anchor="middle" transform="translate(24.1 30.9) scale(0.75 1)">FWHM</text>
</g>
<g transform="translate(870 0)">
<rect x="0.5" y="1.5" width="47" height="47" rx="5" fill="#000" stroke="#f5869a"/>
<rect x="4.5" y="5.5" width="40" height="39" rx="1.5" fill="url(#bg)" stroke="#eebcc0" stroke-width="1.1"/>
<text x="8.4" y="32.1" font-size="19" font-weight="bold" fill="#f6dfe0" stroke="#f6dfe0" stroke-width="0.35">1/e</text>
 <text x="33.6" y="26.2" font-size="11" font-weight="bold" fill="#f6dfe0" stroke="#f6dfe0" stroke-width="0.35">2</text>
</g>

</svg>
</body></html>
